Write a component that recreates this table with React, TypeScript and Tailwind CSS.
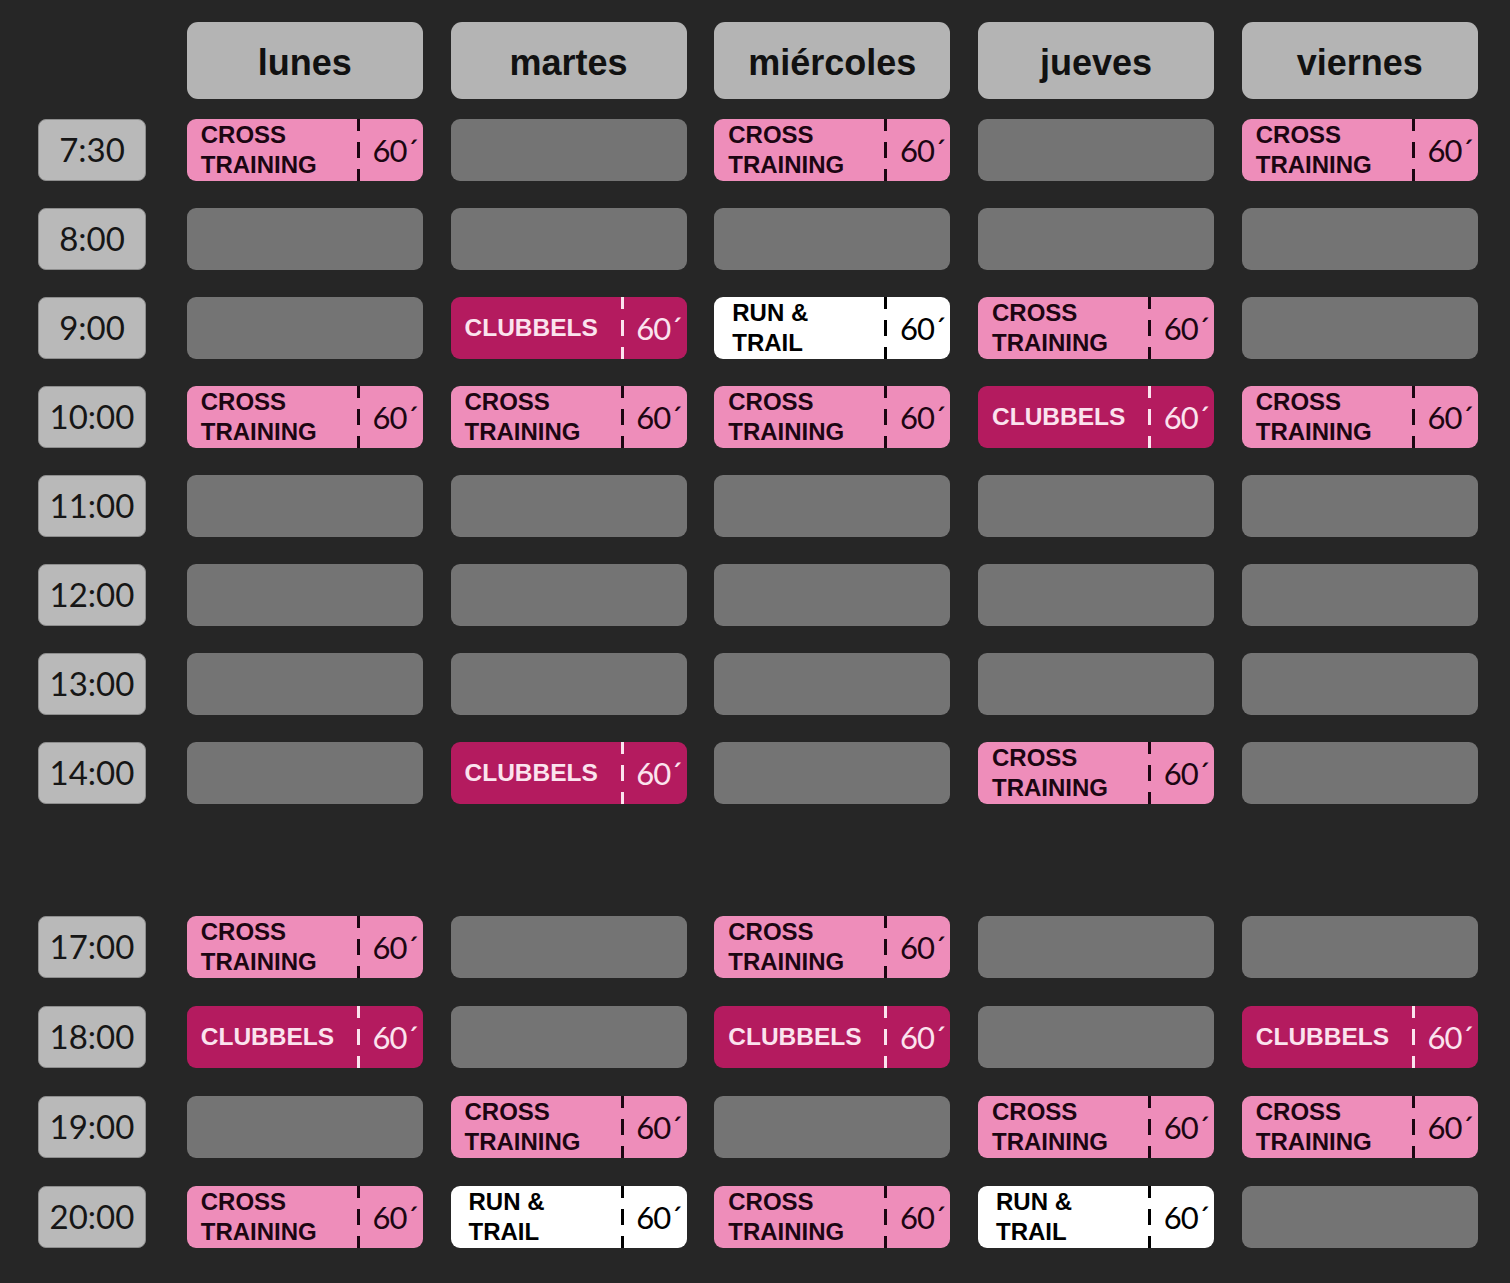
import React from "react";

/* ---------- Data ---------- */

type Kind = "E" | "C" | "CL" | "RT";

const days = ["lunes", "martes", "miércoles", "jueves", "viernes"];

const topRows: [string, Kind[]][] = [
  ["7:30", ["C", "E", "C", "E", "C"]],
  ["8:00", ["E", "E", "E", "E", "E"]],
  ["9:00", ["E", "CL", "RT", "C", "E"]],
  ["10:00", ["C", "C", "C", "CL", "C"]],
  ["11:00", ["E", "E", "E", "E", "E"]],
  ["12:00", ["E", "E", "E", "E", "E"]],
  ["13:00", ["E", "E", "E", "E", "E"]],
  ["14:00", ["E", "CL", "E", "C", "E"]],
];

const bottomRows: [string, Kind[]][] = [
  ["17:00", ["C", "E", "C", "E", "E"]],
  ["18:00", ["CL", "E", "CL", "E", "CL"]],
  ["19:00", ["E", "C", "E", "C", "C"]],
  ["20:00", ["C", "RT", "C", "RT", "E"]],
];

const sans = "font-['Liberation_Sans',Arial,sans-serif]";
const num = "font-['Lato','Open_Sans',sans-serif]";

/* ---------- Pieces ---------- */

const Divider = ({ color }: { color: string }) => (
  <div className="flex flex-col justify-between h-full w-[3px] shrink-0">
    <div className={`h-[12px] w-full ${color}`} />
    <div className={`h-[16px] w-full ${color}`} />
    <div className={`h-[12px] w-full ${color}`} />
  </div>
);

const ClassCell = ({ kind }: { kind: Kind }) => {
  if (kind === "E") return <div className="h-full rounded-[9px] bg-[#747474]" />;

  const styles = {
    C: { bg: "bg-[#ee8dba]", text: "text-[#1c0612]", line: "bg-[#1c0612]" },
    CL: { bg: "bg-[#b41b5f]", text: "text-[#fbe3ee]", line: "bg-[#fbe3ee]" },
    RT: { bg: "bg-white", text: "text-black", line: "bg-black" },
  }[kind];

  return (
    <div className={`h-full rounded-[9px] flex ${styles.bg} ${styles.text}`}>
      <div className={`w-[170px] flex items-center pl-[14px] ${sans} font-bold text-[24px] leading-[30px]`}>
        {kind === "C" && (
          <span>
            CROSS
            <br />
            TRAINING
          </span>
        )}
        {kind === "CL" && <span className="text-[24.5px]">CLUBBELS</span>}
        {kind === "RT" && (
          <span className="pl-[4px]">
            RUN &amp;
            <br />
            TRAIL
          </span>
        )}
      </div>
      <Divider color={styles.line} />
      <div className={`flex-1 flex items-center justify-center pl-[8px] ${num} text-[31px] tracking-[-1px]`}>
        60´
      </div>
    </div>
  );
};

const Row = ({ time, cells }: { time: string; cells: Kind[] }) => (
  <div className="grid grid-cols-[121px_repeat(5,236px)] gap-x-[27.75px] h-[62px]">
    <div className="w-[108px] h-full rounded-[8px] bg-[#b9b9b9] border border-[#8d8d8d] flex items-center justify-center">
      <span className={`${num} text-[33px] text-[#161616]`}>{time}</span>
    </div>
    {cells.map((k, i) => (
      <ClassCell key={i} kind={k} />
    ))}
  </div>
);

/* ---------- Schedule ---------- */

export default function App() {
  return (
    <div className="w-[1510px] h-[1283px] bg-[#262626] pt-[22px] pl-[38px]">
      {/* Header */}
      <div className="grid grid-cols-[121px_repeat(5,236px)] gap-x-[27.75px] h-[77px]">
        <div />
        {days.map((d) => (
          <div
            key={d}
            className="rounded-[11px] bg-[#b4b4b4] flex items-center justify-center pt-[4px]"
          >
            <span className={`${sans} font-bold text-[36px] text-[#111]`}>{d}</span>
          </div>
        ))}
      </div>

      {/* Morning */}
      <div className="flex flex-col gap-[27px] mt-[20px]">
        {topRows.map(([t, c]) => (
          <Row key={t} time={t} cells={c} />
        ))}
      </div>

      {/* Evening */}
      <div className="flex flex-col gap-[28px] mt-[112px]">
        {bottomRows.map(([t, c]) => (
          <Row key={t} time={t} cells={c} />
        ))}
      </div>
    </div>
  );
}
